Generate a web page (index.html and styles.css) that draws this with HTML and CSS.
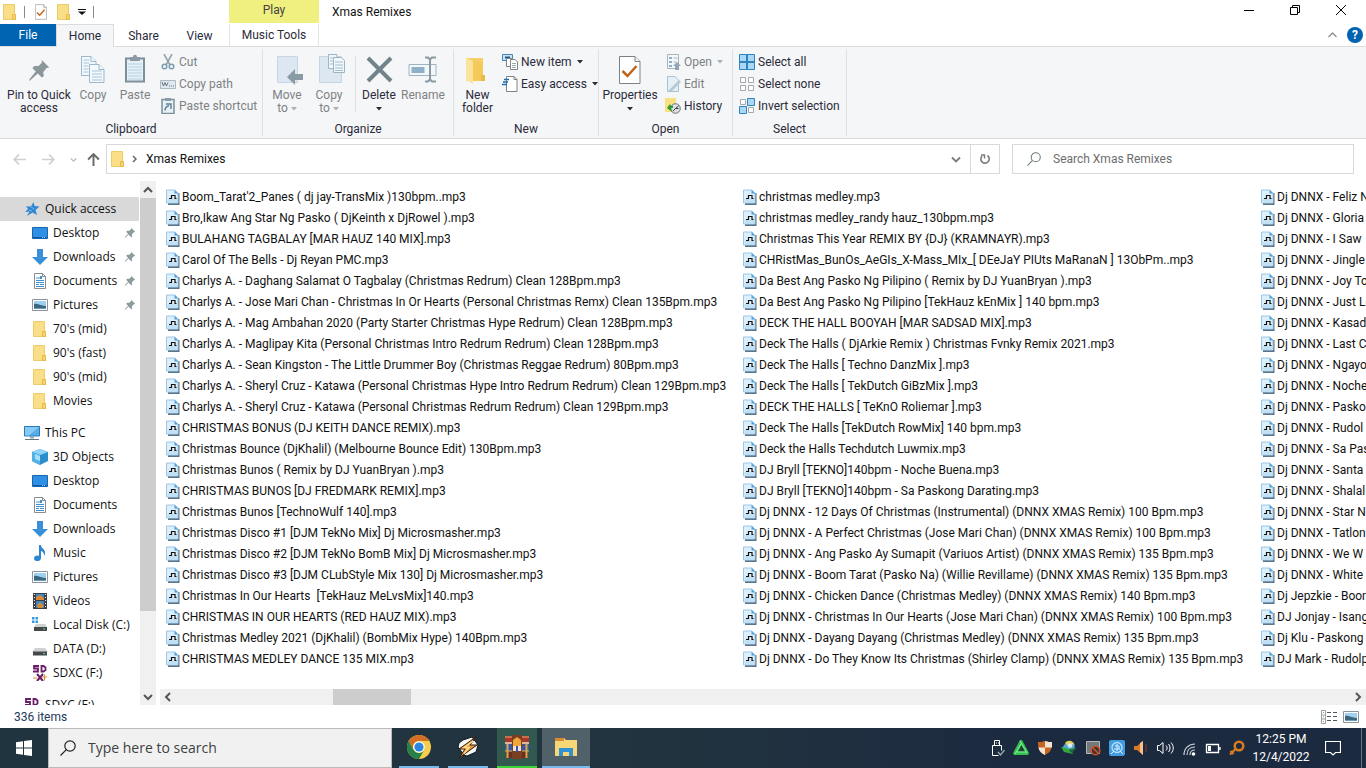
FILE: index.html
```html
<!DOCTYPE html>
<html lang="en">
<head>
<meta charset="utf-8">
<title>Xmas Remixes</title>
<link rel="stylesheet" href="styles.css">
</head>
<body>
<svg class="sprite" aria-hidden="true">
  <symbol id="mp3" viewBox="0 0 14 16"><path d="M12.500 4v11H2" fill="none" stroke="#5b7488" stroke-width="2"/><path d="M.5 1h8.500l3 3v10H.5z" fill="#dceffb" stroke="#9cc6e6"/><path d="M1.500 10h10v3.500h-10z" fill="#c3e1f5"/><path d="M8.500 1L12 4.500H8.500z" fill="#4a9fda"/><path d="M3 9.500h2.500v-3h3.500v3h1.500" fill="none" stroke="#111" stroke-width="1.200"/></symbol>
  <symbol id="folder" viewBox="0 0 14 16"><path d="M.5.5h11v10h1v5H.5z" fill="#fbdf86" stroke="#eccb6b"/><path d="M9.500 15.500v-5h3v5z" fill="#f9d569" stroke="#e5b94d"/></symbol>
  <symbol id="desktop" viewBox="0 0 16 16"><path d="M.5 2.500h15v11H.5z" fill="#2f8fe4" stroke="#1566b0"/><path d="M1 12.500h14" stroke="#12599c"/><path d="M10 12.500h4" stroke="#9fd0f5" stroke-dasharray="1 1"/></symbol>
  <symbol id="down" viewBox="0 0 16 16"><path d="M5 0h6v8h5l-8 8-8-8h5z" fill="#3a8fd9"/></symbol>
  <symbol id="doc" viewBox="0 0 16 16"><path d="M2.500.5h8l3 3v12h-11z" fill="#fff" stroke="#858d92"/><path d="M10.500.5v3h3" fill="none" stroke="#858d92"/><path d="M4 5h4M4 7.500h8M4 9.500h8M4 11.500h3M8 11.500h4M4 13.500h8" stroke="#3f8fca"/><path d="M8 3h2v3H8z" fill="#3f8fca"/></symbol>
  <symbol id="pic" viewBox="0 0 16 16"><path d="M.5 2.500h15v11H.5z" fill="#fff" stroke="#8b959b"/><path d="M2 4h12v8H2z" fill="#9ed0f2"/><path d="M2 7c3-1 4 1 12 2v3H2z" fill="#3c667d"/><path d="M2 11h12v1H2z" fill="#6d9cb8"/></symbol>
  <symbol id="pc" viewBox="0 0 16 16"><path d="M.5 1.500h15v9.500H.5z" fill="#55aee9" stroke="#2a78b8"/><path d="M1 2h14L5 10.500H1z" fill="#85caf6"/><path d="M6 11.500h4v2H6z" fill="#8aa6b8"/><path d="M1 14.500h14" stroke="#68737a"/></symbol>
  <symbol id="cube" viewBox="0 0 16 16"><path d="M8 0l8 3v9l-8 4-8-4V3z" fill="#2a8ecb"/><path d="M8 0l8 3-8 3-8-3z" fill="#8ed6f8"/><path d="M0 3l8 3v10l-8-4z" fill="#50b2e4"/><path d="M3 5l5 2v5L3 10z" fill="#a7e0f8"/></symbol>
  <symbol id="music" viewBox="0 0 16 16"><path d="M7 0h2c0 4 5 4 4 9l-1 2c0-4-1-4-3-5v7c0 4-7 4-7 .5C2 11 5 10 7 11z" fill="#2e86cf"/></symbol>
  <symbol id="video" viewBox="0 0 16 16"><path d="M1 0h14v16H1z" fill="#3c4044"/><path d="M4 1h8v6H4zM4 8h8v7H4z" fill="#3d87c4"/><path d="M4 4l4-2 4 3v2H4zM5 12l3-3 4 4-2 2H6z" fill="#d88a34"/><path d="M2.500 1v15M13.500 1v15" stroke="#eee" stroke-dasharray="1 2"/></symbol>
  <symbol id="drive" viewBox="0 0 16 16"><path d="M3 7h10l3 4H0z" fill="#cfd2d3"/><path d="M1 10.500h14v4H1z" fill="#45494c"/><path d="M11 12h2v1h-2z" fill="#4be36d"/></symbol>
  <symbol id="cdrive" viewBox="0 0 16 16"><path d="M4 7h9l2 3H2z" fill="#cfd2d3"/><path d="M2 10h13v4H2z" fill="#45494c"/><path d="M11 11.500h2v1h-2z" fill="#4be36d"/><path d="M0 0h2.500v2.500H0zM3.500 0H6v2.500H3.500zM0 3.500h2.500V6H0zM3.500 3.500H6V6H3.500z" fill="#2f9ae0"/></symbol>
  <symbol id="sd" viewBox="0 0 16 16"><path d="M7 2H2v3h4v3H1M9.500 2v6h2l2-1.500v-3L11.500 2z" fill="none" stroke="#6b1d68" stroke-width="1.800"/></symbol>
  <symbol id="sdx" viewBox="0 0 16 16"><path d="M7 1H2v2.500h4V6.500H1M9.500 1v5.500h2L13.500 5V2.500L11.500 1z" fill="none" stroke="#6b1d68" stroke-width="1.800"/><path d="M5 9l6 7M11 9l-6 7" stroke="#6b1d68" stroke-width="2"/><path d="M1 13h4M10 12h5M12.500 9.500v6" stroke="#e18b2d"/></symbol>
  <symbol id="star" viewBox="0 0 16 16"><path d="M9.500 1l1 4 5 .5-4 3.500 1.500 5-4.500-2.500L3 15l2.500-4.500L1 11l3-3-2-2.500h5z" fill="#2f86d1"/><path d="M7 6l3 2M5 9l3 1" stroke="#7fb7e6"/></symbol>
  <symbol id="pin" viewBox="0 0 16 16"><path d="M9.500 1l5.500 5.500-2 .5-2.500 2.500.5 3-1.500 1L6 10 2 14l-1 .5.500-1.500L5.500 9 3 6.500 4 5h3l2.500-2.500z" fill="currentColor"/></symbol>
  <symbol id="caret" viewBox="0 0 6 4"><path d="M0 0h6L3 3.500z" fill="currentColor"/></symbol>
  <symbol id="check" viewBox="0 0 22 28"><path d="M.5.500h15.500l5 5V27.500H.5z" fill="#fff" stroke="#7c8387"/><path d="M16 .5v5h5" fill="#eef1f2" stroke="#7c8387"/><path d="M3.500 15l5 5 9-10" fill="none" stroke="#c06418" stroke-width="2.500"/></symbol>
  <symbol id="glass" viewBox="0 0 16 16"><circle cx="10" cy="6" r="5.200" fill="none" stroke="currentColor" stroke-width="1.200"/><path d="M6.300 9.700L.5 15.500" stroke="currentColor" stroke-width="1.200"/></symbol>
</svg>

<header class="titlebar">
  <div class="quick">
    <svg class="i14"><use href="#folder"/></svg><i class="bar"></i>
    <button aria-label="Properties"><svg class="i-check"><use href="#check"/></svg></button>
    <button aria-label="New folder"><svg class="i14"><use href="#folder"/></svg></button>
    <button aria-label="Customize toolbar"><svg class="i-cust" viewBox="0 0 8 6"><path d="M0 .5h8" stroke="#111"/><path d="M0 2.500h8L4 6z" fill="#111"/></svg></button><i class="bar"></i>
  </div>
  <div class="context">Play</div>
  <h1>Xmas Remixes</h1>
  <div class="winbtns">
    <button aria-label="Minimize"><svg viewBox="0 0 12 12"><path d="M1 6.500h10" stroke="#000"/></svg></button>
    <button aria-label="Restore"><svg viewBox="0 0 12 12"><path d="M1.500 3.500h7v7h-7zM3.500 3.500v-2h7v7h-2" fill="none" stroke="#000"/></svg></button>
    <button aria-label="Close"><svg viewBox="0 0 12 12"><path d="M1 1l10 10M11 1L1 11" stroke="#000"/></svg></button>
  </div>
</header>
<nav class="tabs">
  <button class="file">File</button><button class="active">Home</button><button class="share">Share</button><button class="view">View</button><button class="tools">Music Tools</button>
  <span class="tabs-end">
    <button aria-label="Collapse ribbon"><svg class="i-col" viewBox="0 0 9 6"><path d="M.5 5l4-4 4 4" fill="none" stroke="#8c8c8c" stroke-width="1.300"/></svg></button>
    <button class="help" aria-label="Help">?</button>
  </span>
</nav>

<section class="ribbon">
  <div class="group clipboard">
    <div class="tools-row">
      <button class="big w-pin"><svg class="i32" viewBox="0 0 32 32"><g transform="translate(6 7) scale(1.350)" color="#8c979c"><path d="M9.500 0L15 5.500l-2 .5-2.500 3 .5 3-1.500 1L6.500 10 1 15l-1 .5.500-1.500L5 8.500 2.500 6 4 4.500h3l2.500-2.500z" fill="currentColor"/></g></svg><span>Pin to Quick<br>access</span></button>
      <button class="big dim"><svg class="i32" viewBox="0 0 32 32"><g fill="#f3f8fc" stroke="#9db8cb"><path d="M4.500 3.500H14l5 5v14H4.500z"/><path d="M12.500 11.500H22l5 5v13H12.500z"/><path d="M22 11.500v5h5M14 3.500v5h5"/></g><path d="M6.500 7h6M6.500 10h6M6.500 13h5M6.500 16h5M6.500 19h5M15 18h10M15 21h10M15 24h10M15 27h10" stroke="#a9c6da"/></svg><span>Copy</span></button>
      <button class="big dim"><svg class="i32" viewBox="0 0 32 32"><path d="M7 5.500h18v23H7z" fill="#e6f1f7" stroke="#7c8f9b" stroke-width="2"/><path d="M11 4h3c0-3 4-3 4 0h3v4H11z" fill="#8b9aa4"/><path d="M9 11h14M9 14h14M9 17h14M9 20h14M9 23h14M9 26h14" stroke="#b5cfdf"/></svg><span>Paste</span></button>
      <div class="stack">
        <button class="dim"><svg class="i16" viewBox="0 0 16 16"><path d="M4 0l6 11M12 0L6 11" stroke="#93a4ae" stroke-width="1.600"/><circle cx="4.500" cy="12.500" r="2.300" fill="none" stroke="#7e9db2" stroke-width="1.500"/><circle cx="11.500" cy="12.500" r="2.300" fill="none" stroke="#7e9db2" stroke-width="1.500"/></svg>Cut</button>
        <button class="dim"><svg class="i16" viewBox="0 0 16 16"><path d="M.5 4.500h15v8H.5z" fill="#dfe8ee" stroke="#adbac2"/><path d="M2 6l1.500 4L5 6.500 6.500 10 8 6.500M9 10h1M11 10h1M13 10h1" fill="none" stroke="#68777f"/></svg>Copy path</button>
        <button class="dim"><svg class="i16" viewBox="0 0 16 16"><path d="M2 1.500h12v14H2z" fill="#e6f1f7" stroke="#7c8f9b" stroke-width="1.500"/><path d="M5 0h6v3H5z" fill="#8b9aa4"/><path d="M5 12.500c0-3 1-4 4-5M6 6h5v5" fill="none" stroke="#668397" stroke-width="1.500"/></svg>Paste shortcut</button>
      </div>
    </div>
    <div class="name">Clipboard</div>
  </div>
  <div class="group organize">
    <div class="tools-row">
      <button class="big dim"><svg class="i32" viewBox="0 0 32 32"><path d="M6.500 3.500h20v26h-20z" fill="#dce7f1" stroke="#c6d5e3"/><path d="M16 24l8-8v5h8v6h-8v5z" fill="#8b9ba6"/></svg><span>Move<br>to <svg class="caret"><use href="#caret"/></svg></span></button>
      <button class="big dim"><svg class="i32" viewBox="0 0 32 32"><path d="M6.500 3.500h22v26h-22z" fill="#dce7f1" stroke="#c6d5e3"/><g fill="#f1f6fa" stroke="#9eb4c3"><path d="M15.500 1.500H24v14h-8.500z"/><path d="M20.500 4.500h8l3 3v12h-11z"/></g><path d="M22 9h8M22 12h8M22 15h8M22 17.500h8M17 5h3M17 8h3M17 11h3" stroke="#9fc0d4"/></svg><span>Copy<br>to <svg class="caret"><use href="#caret"/></svg></span></button>
      <i class="line"></i>
      <button class="big"><svg class="i32" viewBox="0 0 32 32"><path d="M5 5l23 23M28 5L5 28" stroke="#72838c" stroke-width="4"/></svg><span>Delete<br><svg class="caret"><use href="#caret"/></svg></span></button>
      <button class="big dim"><svg class="i32" viewBox="0 0 32 32"><path d="M2 11.500h27v11H2z" fill="#f2f7fa" stroke="#9fb4c2"/><path d="M4.500 14h13v6h-13z" fill="#8fb0c6"/><path d="M18 4.500h3l2 2 2-2h4M23 6v20M18 28.500h3l2-2 2 2h4" fill="none" stroke="#8a9aa5" stroke-width="2"/></svg><span>Rename</span></button>
    </div>
    <div class="name">Organize</div>
  </div>
  <div class="group new">
    <div class="tools-row">
      <button class="big"><svg class="i32" viewBox="0 0 32 32"><path d="M5 5h17v23H5z" fill="#f5d06a"/><path d="M5 5l7 3v23l-7-4z" fill="#fbe39b"/><path d="M12 8h10v20H12z" fill="#f4cb5a"/><path d="M20 22h4v6h-4z" fill="#e9b94a"/></svg><span>New<br>folder</span></button>
      <div class="stack">
        <button><svg class="i16" viewBox="0 0 16 16"><path d="M.5.500h10v6H.5z" fill="#c7e3f5" stroke="#4385b5"/><path d="M3 2.500h5v2H3z" fill="#1f5a8c"/><path d="M4.500 4.500h6v8h-6z" fill="#fff" stroke="#7e8589"/><path d="M8.500 5.500H13l2.500 2.500v7.500h-7z" fill="#fff" stroke="#7e8589"/><path d="M10 9.500h4M10 11.500h4M10 13.500h4" stroke="#9aa"/></svg>New item <svg class="caret"><use href="#caret"/></svg></button>
        <button><svg class="i16" viewBox="0 0 16 16"><path d="M4.500.5H12l3 3v12H4.500z" fill="#fff" stroke="#7e8589"/><path d="M12 .5v3h3" fill="none" stroke="#7e8589"/><path d="M2 3.500h5M1 6h5M0 8.500h5" stroke="#1f6fae" stroke-width="1.400"/></svg>Easy access <svg class="caret"><use href="#caret"/></svg></button>
      </div>
    </div>
    <div class="name">New</div>
  </div>
  <div class="group open">
    <div class="tools-row">
      <button class="big"><svg class="i32" viewBox="-5 -3 32 32"><use href="#check" width="22" height="28"/></svg><span>Properties<br><svg class="caret"><use href="#caret"/></svg></span></button>
      <div class="stack">
        <button class="dim"><svg class="i16" viewBox="0 0 16 16"><path d="M2.500.500h11v14h-11z" fill="#f3f8fb" stroke="#a6b4bd"/><path d="M4 3h3v2H4zM4 7h3v2H4zM4 11h3v2H4z" fill="#8fb0c4"/><path d="M8.500 4h4M8.500 8h3" stroke="#a6b4bd"/><path d="M8 12l4-4 4 4h-2v4h-4v-4z" fill="#93a5b2"/></svg>Open <svg class="caret"><use href="#caret"/></svg></button>
        <button class="dim"><svg class="i16" viewBox="0 0 16 16"><path d="M2.500.500H10l3.500 3.500v11.500h-11z" fill="#e4eff6" stroke="#a9c2d3"/><path d="M3 15L14 4l2 2-9 9z" fill="#b7cad6"/></svg>Edit</button>
        <button><svg class="i16" viewBox="0 0 16 16"><path d="M0 0h11v14H0z" fill="#fbe083"/><circle cx="10.500" cy="10.500" r="4.800" fill="#dcdfe0" stroke="#6c7478"/><path d="M10.500 10.500l3-2.500M10.500 10.500h3M8 13l2.500-2.500" stroke="#3a3f42"/><path d="M2 10l3-4 1 2h2v2H6l1 4z" fill="#2f9a3a"/></svg>History</button>
      </div>
    </div>
    <div class="name">Open</div>
  </div>
  <div class="group select">
    <div class="tools-row">
      <div class="stack">
        <button><svg class="i16" viewBox="0 0 16 16"><path d="M.500.500h15v15H.5z" fill="#a8d8f6" stroke="#3183bd"/><path d="M7.500 0v16M8.500 0v16M0 7.500h16M0 8.500h16" stroke="#3183bd"/></svg>Select all</button>
        <button><svg class="i16" viewBox="0 0 16 16"><path d="M1.500 1.500h5v5h-5zM9.500 1.500h5v5h-5zM1.500 9.500h5v5h-5zM9.500 9.500h5v5h-5z" fill="#fff" stroke="#a5a9ab"/></svg>Select none</button>
        <button><svg class="i16" viewBox="0 0 16 16"><path d="M1.500 1.500h5v5h-5zM9.500 9.500h5v5h-5z" fill="#fff" stroke="#a5a9ab"/><path d="M8.500.500h7v7h-7zM.500 8.500h7v7h-7z" fill="#a8d8f6" stroke="#3183bd"/></svg>Invert selection</button>
      </div>
    </div>
    <div class="name">Select</div>
  </div>
</section>

<section class="address">
  <div class="arrows">
    <button aria-label="Back"><svg viewBox="0 0 12 12"><path d="M12 6H1M5.500 1.500L1 6l4.500 4.500" fill="none" stroke="#cfcfcf" stroke-width="1.500"/></svg></button>
    <button aria-label="Forward"><svg viewBox="0 0 12 12"><path d="M0 6h11M6.500 1.500L11 6l-4.500 4.500" fill="none" stroke="#cfcfcf" stroke-width="1.500"/></svg></button>
    <button class="recent" aria-label="Recent"><svg viewBox="0 0 12 12"><path d="M3.500 5L6 7.500 8.500 5" fill="none" stroke="#bdbdbd" stroke-width="1.300"/></svg></button>
    <button aria-label="Up"><svg viewBox="0 0 12 12"><path d="M6 12V1M1 6l5-5 5 5" fill="none" stroke="#6a6a6a" stroke-width="1.800"/></svg></button>
  </div>
  <div class="path">
    <svg class="i14"><use href="#folder"/></svg>
    <svg class="chev" viewBox="0 0 5 8"><path d="M1 1l3 3-3 3" fill="none" stroke="#666" stroke-width="1.500"/></svg>
    <a href="#">Xmas Remixes</a>
    <button class="drop" aria-label="Previous locations"><svg viewBox="0 0 12 12"><path d="M2 4.500l4 4 4-4" fill="none" stroke="#7b7b7b" stroke-width="1.800"/></svg></button>
    <button class="reload" aria-label="Refresh"><svg viewBox="0 0 12 12"><path d="M8.500 2.500A4.200 4.200 0 1 1 3 3" fill="none" stroke="#7b7b7b" stroke-width="1.600"/><path d="M2 2h3.500v3.500" fill="none" stroke="#7b7b7b" stroke-width="1.400"/></svg></button>
  </div>
  <label class="find"><svg viewBox="0 0 16 16"><use href="#glass"/></svg><input type="search" placeholder="Search Xmas Remixes" aria-label="Search Xmas Remixes"></label>
</section>

<main class="body">
  <nav class="side">
    <a class="root on" href="#"><svg class="i16"><use href="#star"/></svg>Quick access</a>
    <a href="#"><svg class="i16"><use href="#desktop"/></svg>Desktop<svg class="pin"><use href="#pin"/></svg></a>
    <a href="#"><svg class="i16"><use href="#down"/></svg>Downloads<svg class="pin"><use href="#pin"/></svg></a>
    <a href="#"><svg class="i16"><use href="#doc"/></svg>Documents<svg class="pin"><use href="#pin"/></svg></a>
    <a href="#"><svg class="i16"><use href="#pic"/></svg>Pictures<svg class="pin"><use href="#pin"/></svg></a>
    <a href="#"><svg class="i16"><use href="#folder"/></svg>70's (mid)</a>
    <a href="#"><svg class="i16"><use href="#folder"/></svg>90's (fast)</a>
    <a href="#"><svg class="i16"><use href="#folder"/></svg>90's (mid)</a>
    <a href="#"><svg class="i16"><use href="#folder"/></svg>Movies</a>
    <a class="root gap" href="#"><svg class="i16"><use href="#pc"/></svg>This PC</a>
    <a href="#"><svg class="i16"><use href="#cube"/></svg>3D Objects</a>
    <a href="#"><svg class="i16"><use href="#desktop"/></svg>Desktop</a>
    <a href="#"><svg class="i16"><use href="#doc"/></svg>Documents</a>
    <a href="#"><svg class="i16"><use href="#down"/></svg>Downloads</a>
    <a href="#"><svg class="i16"><use href="#music"/></svg>Music</a>
    <a href="#"><svg class="i16"><use href="#pic"/></svg>Pictures</a>
    <a href="#"><svg class="i16"><use href="#video"/></svg>Videos</a>
    <a href="#"><svg class="i16"><use href="#cdrive"/></svg>Local Disk (C:)</a>
    <a href="#"><svg class="i16"><use href="#drive"/></svg>DATA (D:)</a>
    <a href="#"><svg class="i16"><use href="#sdx"/></svg>SDXC (F:)</a>
    <a class="root gap" href="#"><svg class="i16"><use href="#sd"/></svg>SDXC (F:)</a>
  </nav>
  <div class="vscroll">
    <button aria-label="Scroll up"><svg viewBox="0 0 10 10"><path d="M1 7l4-4 4 4" fill="none" stroke="#555" stroke-width="2"/></svg></button>
    <div class="vthumb"></div>
    <button aria-label="Scroll down"><svg viewBox="0 0 10 10"><path d="M1 3l4 4 4-4" fill="none" stroke="#555" stroke-width="2"/></svg></button>
  </div>
  <div class="content">
    <div class="files">
      <ul class="col-a">
        <li><svg><use href="#mp3"/></svg>Boom_Tarat'2_Panes ( dj jay-TransMix )130bpm..mp3</li>
        <li><svg><use href="#mp3"/></svg>Bro,Ikaw Ang Star Ng Pasko ( DjKeinth x DjRowel ).mp3</li>
        <li><svg><use href="#mp3"/></svg>BULAHANG TAGBALAY [MAR HAUZ 140 MIX].mp3</li>
        <li><svg><use href="#mp3"/></svg>Carol Of The Bells - Dj Reyan PMC.mp3</li>
        <li><svg><use href="#mp3"/></svg>Charlys A. - Daghang Salamat O Tagbalay (Christmas Redrum) Clean 128Bpm.mp3</li>
        <li><svg><use href="#mp3"/></svg>Charlys A. - Jose Mari Chan - Christmas In Or Hearts (Personal Christmas Remx) Clean 135Bpm.mp3</li>
        <li><svg><use href="#mp3"/></svg>Charlys A. - Mag Ambahan 2020 (Party Starter Christmas Hype Redrum) Clean 128Bpm.mp3</li>
        <li><svg><use href="#mp3"/></svg>Charlys A. - Maglipay Kita (Personal Christmas Intro Redrum Redrum) Clean 128Bpm.mp3</li>
        <li><svg><use href="#mp3"/></svg>Charlys A. - Sean Kingston - The Little Drummer Boy (Christmas Reggae Redrum) 80Bpm.mp3</li>
        <li><svg><use href="#mp3"/></svg>Charlys A. - Sheryl Cruz - Katawa (Personal Christmas Hype Intro Redrum Redrum) Clean 129Bpm.mp3</li>
        <li><svg><use href="#mp3"/></svg>Charlys A. - Sheryl Cruz - Katawa (Personal Christmas Redrum Redrum) Clean 129Bpm.mp3</li>
        <li><svg><use href="#mp3"/></svg>CHRISTMAS BONUS (DJ KEITH DANCE REMIX).mp3</li>
        <li><svg><use href="#mp3"/></svg>Christmas Bounce (DjKhalil) (Melbourne Bounce Edit) 130Bpm.mp3</li>
        <li><svg><use href="#mp3"/></svg>Christmas Bunos ( Remix by DJ YuanBryan ).mp3</li>
        <li><svg><use href="#mp3"/></svg>CHRISTMAS BUNOS [DJ FREDMARK REMIX].mp3</li>
        <li><svg><use href="#mp3"/></svg>Christmas Bunos [TechnoWulf 140].mp3</li>
        <li><svg><use href="#mp3"/></svg>Christmas Disco #1 [DJM TekNo Mix] Dj Microsmasher.mp3</li>
        <li><svg><use href="#mp3"/></svg>Christmas Disco #2 [DJM TekNo BomB Mix] Dj Microsmasher.mp3</li>
        <li><svg><use href="#mp3"/></svg>Christmas Disco #3 [DJM CLubStyle Mix 130] Dj Microsmasher.mp3</li>
        <li><svg><use href="#mp3"/></svg>Christmas In Our Hearts  [TekHauz MeLvsMix]140.mp3</li>
        <li><svg><use href="#mp3"/></svg>CHRISTMAS IN OUR HEARTS (RED HAUZ MIX).mp3</li>
        <li><svg><use href="#mp3"/></svg>Christmas Medley 2021 (DjKhalil) (BombMix Hype) 140Bpm.mp3</li>
        <li><svg><use href="#mp3"/></svg>CHRISTMAS MEDLEY DANCE 135 MIX.mp3</li>
      </ul>
      <ul class="col-b">
        <li><svg><use href="#mp3"/></svg>christmas medley.mp3</li>
        <li><svg><use href="#mp3"/></svg>christmas medley_randy hauz_130bpm.mp3</li>
        <li><svg><use href="#mp3"/></svg>Christmas This Year REMIX BY {DJ} (KRAMNAYR).mp3</li>
        <li><svg><use href="#mp3"/></svg>CHRistMas_BunOs_AeGIs_X-Mass_MIx_[ DEeJaY PIUts MaRanaN ] 13ObPm..mp3</li>
        <li><svg><use href="#mp3"/></svg>Da Best Ang Pasko Ng Pilipino ( Remix by DJ YuanBryan ).mp3</li>
        <li><svg><use href="#mp3"/></svg>Da Best Ang Pasko Ng Pilipino [TekHauz kEnMix ] 140 bpm.mp3</li>
        <li><svg><use href="#mp3"/></svg>DECK THE HALL BOOYAH [MAR SADSAD MIX].mp3</li>
        <li><svg><use href="#mp3"/></svg>Deck The Halls ( DjArkie Remix ) Christmas Fvnky Remix 2021.mp3</li>
        <li><svg><use href="#mp3"/></svg>Deck The Halls [ Techno DanzMix ].mp3</li>
        <li><svg><use href="#mp3"/></svg>Deck The Halls [ TekDutch GiBzMix ].mp3</li>
        <li><svg><use href="#mp3"/></svg>DECK THE HALLS [ TeKnO Roliemar ].mp3</li>
        <li><svg><use href="#mp3"/></svg>Deck The Halls [TekDutch RowMix] 140 bpm.mp3</li>
        <li><svg><use href="#mp3"/></svg>Deck the Halls Techdutch Luwmix.mp3</li>
        <li><svg><use href="#mp3"/></svg>DJ Bryll [TEKNO]140bpm - Noche Buena.mp3</li>
        <li><svg><use href="#mp3"/></svg>DJ Bryll [TEKNO]140bpm - Sa Paskong Darating.mp3</li>
        <li><svg><use href="#mp3"/></svg>Dj DNNX - 12 Days Of Christmas (Instrumental) (DNNX XMAS Remix) 100 Bpm.mp3</li>
        <li><svg><use href="#mp3"/></svg>Dj DNNX - A Perfect Christmas (Jose Mari Chan) (DNNX XMAS Remix) 100 Bpm.mp3</li>
        <li><svg><use href="#mp3"/></svg>Dj DNNX - Ang Pasko Ay Sumapit (Variuos Artist) (DNNX XMAS Remix) 135 Bpm.mp3</li>
        <li><svg><use href="#mp3"/></svg>Dj DNNX - Boom Tarat (Pasko Na) (Willie Revillame) (DNNX XMAS Remix) 135 Bpm.mp3</li>
        <li><svg><use href="#mp3"/></svg>Dj DNNX - Chicken Dance (Christmas Medley) (DNNX XMAS Remix) 140 Bpm.mp3</li>
        <li><svg><use href="#mp3"/></svg>Dj DNNX - Christmas In Our Hearts (Jose Mari Chan) (DNNX XMAS Remix) 100 Bpm.mp3</li>
        <li><svg><use href="#mp3"/></svg>Dj DNNX - Dayang Dayang (Christmas Medley) (DNNX XMAS Remix) 135 Bpm.mp3</li>
        <li><svg><use href="#mp3"/></svg>Dj DNNX - Do They Know Its Christmas (Shirley Clamp) (DNNX XMAS Remix) 135 Bpm.mp3</li>
      </ul>
      <ul class="col-c">
        <li><svg><use href="#mp3"/></svg>Dj DNNX - Feliz N</li>
        <li><svg><use href="#mp3"/></svg>Dj DNNX - Gloria</li>
        <li><svg><use href="#mp3"/></svg>Dj DNNX - I Saw</li>
        <li><svg><use href="#mp3"/></svg>Dj DNNX - Jingle</li>
        <li><svg><use href="#mp3"/></svg>Dj DNNX - Joy To</li>
        <li><svg><use href="#mp3"/></svg>Dj DNNX - Just Lo</li>
        <li><svg><use href="#mp3"/></svg>Dj DNNX - Kasad</li>
        <li><svg><use href="#mp3"/></svg>Dj DNNX - Last C</li>
        <li><svg><use href="#mp3"/></svg>Dj DNNX - Ngayo</li>
        <li><svg><use href="#mp3"/></svg>Dj DNNX - Noche</li>
        <li><svg><use href="#mp3"/></svg>Dj DNNX - Pasko</li>
        <li><svg><use href="#mp3"/></svg>Dj DNNX - Rudol</li>
        <li><svg><use href="#mp3"/></svg>Dj DNNX - Sa Pas</li>
        <li><svg><use href="#mp3"/></svg>Dj DNNX - Santa</li>
        <li><svg><use href="#mp3"/></svg>Dj DNNX - Shalal</li>
        <li><svg><use href="#mp3"/></svg>Dj DNNX - Star N</li>
        <li><svg><use href="#mp3"/></svg>Dj DNNX - Tatlon</li>
        <li><svg><use href="#mp3"/></svg>Dj DNNX - We W</li>
        <li><svg><use href="#mp3"/></svg>Dj DNNX - White</li>
        <li><svg><use href="#mp3"/></svg>Dj Jepzkie - Boom</li>
        <li><svg><use href="#mp3"/></svg>DJ Jonjay - Isang</li>
        <li><svg><use href="#mp3"/></svg>Dj Klu - Paskong</li>
        <li><svg><use href="#mp3"/></svg>DJ Mark - Rudolp</li>
      </ul>
    </div>
    <div class="hscroll">
      <button aria-label="Scroll left"><svg viewBox="0 0 10 10"><path d="M7 1L3 5l4 4" fill="none" stroke="#555" stroke-width="2"/></svg></button>
      <div class="htrack"><div class="hthumb"></div></div>
      <button aria-label="Scroll right"><svg viewBox="0 0 10 10"><path d="M3 1l4 4-4 4" fill="none" stroke="#555" stroke-width="2"/></svg></button>
    </div>
  </div>
</main>

<footer class="status"><span>336 items</span>
  <div class="views">
    <button aria-label="Details"><svg class="i16" viewBox="0 0 16 14"><path d="M.5.500h4v13h-4zM.5 5h4M.5 9h4" fill="none" stroke="#93a2a8"/><path d="M6 2.500h4M12 2.500h4M6 6.500h4M12 6.500h4M6 10.500h4M12 10.500h4" stroke="#4c5960"/><path d="M2 2h1v1H2zM2 6.500h1v1H2zM2 11h1v1H2z" fill="#d6862f"/></svg></button>
    <button aria-label="Large icons"><svg class="i16"><use href="#pic"/></svg></button>
  </div>
</footer>

<footer class="taskbar">
  <button class="start" aria-label="Start"><svg class="i16" viewBox="0 0 16 16"><path d="M0 2.200L7 1.200v6.300H0zM8 1l8-1v7.500H8zM0 8.500h7v6.300l-7-1zM8 8.500h8V16l-8-1z" fill="#fff"/></svg></button>
  <label class="tsearch"><svg class="i16"><use href="#glass"/></svg><input type="text" placeholder="Type here to search" aria-label="Type here to search"></label>
  <div class="apps">
    <button class="app" aria-label="Chrome"><svg viewBox="0 0 24 24"><circle cx="12" cy="12" r="12" fill="#f6cd4e"/><path d="M1.600 6a12 12 0 0 1 20.800 0H12a6 6 0 0 0-5.200 9z" fill="#d36f24"/><path d="M1.600 6A12 12 0 0 0 12 24l5.200-9a6 6 0 0 1-10.400 0z" fill="#268047"/><circle cx="12" cy="12" r="5.800" fill="#fff"/><circle cx="12" cy="12" r="4.600" fill="#2d86df"/></svg></button>
    <button class="app" aria-label="Winamp"><svg viewBox="0 0 24 24"><path d="M7 5l9-3 6 8-2 7-9 4-3-1-6-8 1-4z" fill="#f5f5f5" stroke="#15191b"/><path d="M20 2L3 14h6l-6 9 18-13h-7z" fill="#e8963a" stroke="#2c1b0d"/><path d="M17 6L8 12.500h5l-5 6" fill="none" stroke="#ffe08c" stroke-width="1.500"/></svg></button>
    <button class="app rar" aria-label="WinRAR"><svg viewBox="0 0 24 24"><path d="M0 1h24v7H0z" fill="#a8382c"/><path d="M0 1h24v2H0z" fill="#c97048"/><path d="M0 7h24v2H0z" fill="#d9b99a"/><path d="M0 9h24v7H0z" fill="#3e549f"/><path d="M1 16h22v7H1z" fill="#6d2d22"/><path d="M0 16h24" stroke="#d9b25b"/><path d="M7 0h10v24H7z" fill="#7a3f20"/><path d="M8 5l4-3 4 3v6H8z" fill="#f1a735"/><path d="M8 11h8v5H8z" fill="#e4e4ea"/><path d="M11 11h2v6h-2z" fill="#3e549f"/><path d="M2.500 9v14M21.500 9v14" stroke="#d2ac4e" stroke-width="2"/></svg></button>
    <button class="app explorer" aria-label="File Explorer"><svg viewBox="0 0 24 24"><path d="M1 3h9l2 2h11v16H1z" fill="#f7d675"/><path d="M1 3h9v3H1z" fill="#d98b31"/><path d="M5 13h14v8h-4v-4H9v4H5z" fill="#3291d4"/></svg></button>
  </div>
  <div class="tray">
    <button aria-label="Eject"><svg viewBox="0 0 16 16"><path d="M5.500 5V.5h5V5M3.500 5.500h9v5M3.500 5.500v10h6M7 3h1M9 3h1" fill="none" stroke="#fff"/><path d="M9 12l2.500 3L15.500 10" fill="none" stroke="#9daab2" stroke-width="1.300"/></svg></button>
    <button aria-label="Sync"><svg viewBox="0 0 16 16"><path d="M7 0h2l7 13-1 2H1l-1-2z" fill="#34c04f"/><path d="M8.500 5l3.500 6.500H5z" fill="#1c4331"/><path d="M7 1l7 12M4 12h9M2 14L8 4" fill="none" stroke="#86f19c"/></svg></button>
    <button aria-label="Security"><svg viewBox="0 0 16 16"><path d="M8 1c3 1 5 1 7 1 0 7-1 10-7 13C2 12 1 9 1 2c2 0 4 0 7-1z" fill="#c56522"/><path d="M8 1c3 1 5 1 7 1v5.500H8zM1.500 7.500H8v7.500C4 13 2 11 1.500 7.500z" fill="#f1e5d7"/></svg></button>
    <button aria-label="Download manager"><svg viewBox="0 0 16 16"><path d="M1 8c2-2 3-6 7-7 5 0 7 4 5 8l-5 2z" fill="#57a6d5"/><path d="M4 3c3-4 9-2 9 2l-3-1-3 2z" fill="#e2ce5d"/><circle cx="9" cy="5.500" r="2.300" fill="#d8eef7"/><path d="M0 7l5 1 3 1 7-1-4 4 1 2-9-2z" fill="#34a744"/><path d="M8 10l7-2-5 5z" fill="#176c35"/></svg></button>
    <button aria-label="Graphics"><svg viewBox="0 0 16 16"><path d="M1.500 1.500h13v12h-13z" fill="#73797b" stroke="#b3b8b9"/><circle cx="10.500" cy="10.500" r="4.300" fill="#403331" stroke="#c9532a" stroke-width="1.600"/><path d="M7.500 7.500l6 6" stroke="#c9532a" stroke-width="1.600"/></svg></button>
    <button aria-label="Utility"><svg viewBox="0 0 16 16"><rect width="16" height="16" rx="2" fill="#429ce0"/><circle cx="8" cy="7.500" r="5" fill="none" stroke="#b9e0fb" stroke-width="1.300"/><path d="M5 9h6M8 4v7M6 6h4v3M2 14l3-3M14 14l-3-3" fill="none" stroke="#d8effe"/></svg></button>
    <button aria-label="Audio"><svg viewBox="0 0 16 16"><path d="M1 6h3l6-5v14l-6-5H1z" fill="#d87928"/><path d="M7 3l3-2v14l-3-3z" fill="#f5c18b"/><path d="M13 4v8" stroke="#8e3528"/></svg></button>
    <button aria-label="Volume"><svg class="w18" viewBox="0 0 18 16"><path d="M1.500 5.500h2l3.500-3v11l-3.500-3h-2zM10 5.500c1.500 1.500 1.500 3.500 0 5M12.500 4c2 2.500 2 5.500 0 8M15 2.500c3 3.500 3 7.500 0 11" fill="none" stroke="#fff"/></svg></button>
    <button aria-label="Network"><svg viewBox="0 0 16 16"><path d="M3 15C3 8 8 4 14 4M6 15c0-5 3-8 8-8M9 15c0-3 2-5 5-5" fill="none" stroke="#c9d1d8" stroke-width="1.200"/><circle cx="12.500" cy="14" r="1.800" fill="#fff"/></svg></button>
    <button aria-label="Battery"><svg viewBox="0 0 16 16"><path d="M1.500 4.500h12v8h-12zM15 7v3" fill="none" stroke="#fff" stroke-width="1.300"/><path d="M3 6h3v5H3z" fill="#fff"/></svg></button>
    <button aria-label="Search tool"><svg viewBox="0 0 16 16"><circle cx="10" cy="6" r="4.300" fill="none" stroke="#d87c1e" stroke-width="2.500"/><path d="M6.500 9L1 14.500M1.500 11l3 3" stroke="#d87c1e" stroke-width="2.200"/></svg></button>
  </div>
  <button class="clock">12:25 PM<br>12/4/2022</button>
  <button class="notice" aria-label="Notifications"><svg class="i16" viewBox="0 0 16 16"><path d="M.5 1.500h15v11h-5L8 15l-2.500-2.500h-5z" fill="none" stroke="#fff" stroke-width="1.200"/></svg></button>
  <button class="peek" aria-label="Show desktop"></button>
</footer>
</body>
</html>
```
FILE: styles.css
```css
* { box-sizing: border-box; }
body { margin: 0; height: 100vh; display: flex; flex-direction: column; overflow: hidden; background: #fff; color: #111; font: 12px/16px Roboto, "Open Sans", sans-serif; }
button { font: inherit; color: inherit; background: none; border: 0; padding: 0; margin: 0; display: inline-flex; align-items: center; justify-content: center; white-space: nowrap; }
input { font: inherit; border: 0; background: none; outline: 0; padding: 0; min-width: 0; flex: 1; }
a { color: inherit; text-decoration: none; }
svg { flex: none; display: block; }
.sprite { width: 0; height: 0; position: absolute; }
.i14 { width: 14px; height: 16px; }
.i16 { width: 16px; height: 16px; }
.i32 { width: 32px; height: 32px; }
.caret { width: 6px; height: 4px; display: inline-block; vertical-align: middle; }

.titlebar { display: flex; height: 24px; flex: none; }
.quick { display: flex; align-items: center; width: 229px; padding-left: 3px; gap: 7px; }
.bar { width: 1px; height: 12px; background: #888; }
.quick .i-check { width: 12px; height: 16px; margin: 0 3px; }
.i-cust { width: 8px; height: 6px; }
.context { width: 90px; background: #f0f080; text-align: center; padding-top: 2px; height: 23px; color: #444; }
.titlebar h1 { margin: 0; font-size: 12px; font-weight: 400; padding: 4px 13px; flex: 1; }
.winbtns { display: flex; height: 20px; padding-right: 2px; }
.winbtns button { width: 46px; }
.winbtns svg { width: 12px; height: 12px; }

.tabs { display: flex; height: 23px; flex: none; color: #2b2b3a; border-bottom: 1px solid #dadbdc; }
.tabs > button { height: 23px; }
.tabs .file { width: 56px; background: #0063b1; color: #fff; height: 22px; }
.tabs .active { width: 58px; background: #f5f6f7; border: 1px solid #dadbdc; border-bottom: 0; }
.tabs .share { width: 59px; }
.tabs .view { width: 53px; }
.tabs .tools { width: 90px; margin-left: 3px; border: solid #e4e4e4; border-width: 0 1px; height: 22px; }
.tabs-end { margin-left: auto; display: flex; align-items: center; gap: 10px; padding-right: 3px; }
.i-col { width: 9px; height: 6px; }
.help { width: 16px; height: 16px; border-radius: 8px; background: #0063b1; color: #fff; font-weight: 700; }

.ribbon { display: flex; height: 92px; flex: none; background: #f5f6f7; border-bottom: 1px solid #dadbdc; color: #2b2b3a; padding-top: 2px; }
.group { height: 87px; border-right: 1px solid #dfe0e1; }
.clipboard { width: 263px; }
.organize { width: 191px; }
.new { width: 145px; }
.open { width: 134px; }
.select { width: 114px; }
.tools-row { display: flex; height: 72px; padding: 2px 0 0 3px; }
.clipboard .tools-row, .select .tools-row { padding-left: 6px; }
.open .tools-row { padding-left: 0; }
.name { text-align: center; line-height: 16px; }
.big { flex-direction: column; justify-content: flex-start; width: 42px; padding-top: 2px; line-height: 13px; }
.big > span { padding-top: 4px; }
.big.w-pin { width: 66px; }
.open .big { width: 62px; }
.organize .big:last-child { width: 46px; }
.dim { color: #7e8285; }
.dim .caret { opacity: .6; }
.line { width: 1px; height: 56px; margin: 5px 2px 0 5px; background: #dfe0e1; }
.stack { display: flex; flex-direction: column; align-items: flex-start; }
.stack button { height: 22px; gap: 3px; }
.stack .caret { margin-left: 2px; }
.clipboard .stack, .new .stack, .open .stack { padding-left: 4px; }

.address { display: flex; height: 42px; flex: none; padding: 5px 12px 7px 0; }
.arrows { display: flex; align-items: center; width: 106px; padding-left: 13px; gap: 16px; }
.arrows svg { width: 13px; height: 13px; }
.arrows .recent { width: 4px; }
.arrows .recent + button { margin-left: -4px; }
.path { flex: 1; display: flex; align-items: center; border: 1px solid #d9d9d9; padding-left: 4px; }
.path a { flex: 1; }
.chev { width: 5px; height: 8px; margin: 0 9px 0 7px; }
.path .drop, .path .reload { width: 29px; height: 28px; }
.path .reload { border-left: 1px solid #d9d9d9; }
.path button svg { width: 12px; height: 12px; }
.find { width: 342px; margin-left: 12px; display: flex; align-items: center; gap: 12px; border: 1px solid #d9d9d9; padding: 0 14px; color: #6d7c79; }
.find svg { width: 14px; height: 14px; }
.find input::placeholder { color: #6d6d6d; opacity: 1; }

.body { flex: 1; min-height: 0; display: flex; }
.side { width: 140px; padding-top: 16px; overflow: hidden; font-family: "Open Sans", sans-serif; }
.side a { display: flex; align-items: center; height: 24px; width: 139px; padding-left: 32px; gap: 5px; white-space: nowrap; }
.side .root { padding-left: 24px; }
.side .on { background: #d9d9d9; }
.side .gap { margin-top: 8px; }
.side .pin { width: 12px; height: 12px; margin: 0 3px 0 auto; color: #8f9a9f; }
.vscroll { width: 16px; background: #f0f0f0; display: flex; flex-direction: column; }
.vscroll button { height: 17px; }
.vscroll svg, .hscroll svg { width: 10px; height: 10px; }
.vthumb { height: 413px; background: #cdcdcd; margin-bottom: auto; }
.content { flex: 1; min-width: 0; margin-left: 4px; display: flex; flex-direction: column; }
.files { flex: 1; min-height: 0; display: flex; overflow: hidden; padding: 5px 0 0 6px; }
.files ul { list-style: none; margin: 0; padding: 0; flex: none; }
.files li { display: flex; align-items: center; height: 21px; gap: 2px; white-space: pre; }
.files li svg { width: 14px; height: 16px; }
.col-a { width: 577px; }
.col-b { width: 518px; }
.hscroll { height: 16px; display: flex; background: #f0f0f0; }
.hscroll button { width: 16px; }
.htrack { flex: 1; padding-left: 13%; }
.hthumb { width: 78px; height: 16px; background: #cdcdcd; }

.status { height: 23px; flex: none; display: flex; align-items: center; padding: 0 7px 0 14px; color: #1e395b; }
.views { margin-left: auto; display: flex; gap: 6px; }

.taskbar { height: 40px; flex: none; display: flex; background: linear-gradient(90deg, #20343f 0%, #22343f 45%, #1c2a40 75%); color: #fff; }
.start { width: 48px; }
.tsearch { width: 344px; display: flex; align-items: center; gap: 12px; padding: 0 11px; background: #f1f1f1; border: 1px solid #bbb; color: #222; font: 14px/20px "Open Sans", sans-serif; }
.tsearch input::placeholder { color: #3d4143; opacity: 1; }
.apps { display: flex; padding-left: 7px; gap: 9px; }
.app { width: 40px; border-bottom: 2px solid #76b9ed; }
.app svg { width: 24px; height: 24px; }
.app.rar { background: #31594f; border-color: #3ad33a; }
.app.explorer { width: 48px; margin-left: -4px; background: #51616a; }
.tray { margin-left: auto; display: flex; }
.tray button { width: 24px; }
.tray svg { width: 16px; height: 16px; }
.tray .w18 { width: 18px; }
.clock { width: 64px; line-height: 18px; text-align: center; }
.notice { width: 40px; }
.peek { width: 5px; margin-left: 8px; border-left: 1px solid #67727c; }
```
